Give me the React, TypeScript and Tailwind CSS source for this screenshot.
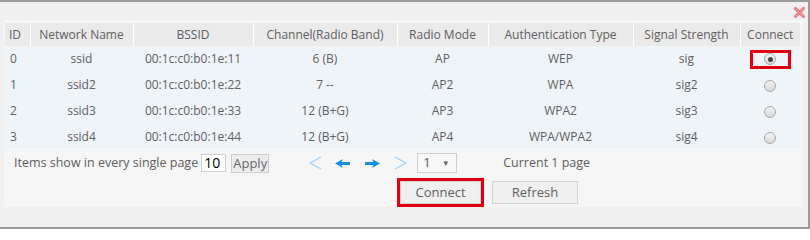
import React from "react";

const cols = [
  { w: "w-[25px]", label: "ID", left: true },
  { w: "w-[103px]", label: "Network Name" },
  { w: "w-[120px]", label: "BSSID" },
  { w: "w-[144px]", label: "Channel(Radio Band)" },
  { w: "w-[91px]", label: "Radio Mode" },
  { w: "w-[145px]", label: "Authentication Type" },
  { w: "w-[107px]", label: "Signal Strength" },
  { w: "w-[60px]", label: "Connect" },
];

const rows = [
  ["0", "ssid", "00:1c:c0:b0:1e:11", "6 (B)", "AP", "WEP", "sig"],
  ["1", "ssid2", "00:1c:c0:b0:1e:22", "7 --", "AP2", "WPA", "sig2"],
  ["2", "ssid3", "00:1c:c0:b0:1e:33", "12 (B+G)", "AP3", "WPA2", "sig3"],
  ["3", "ssid4", "00:1c:c0:b0:1e:44", "12 (B+G)", "AP4", "WPA/WPA2", "sig4"],
];

function Radio({ checked }: { checked?: boolean }) {
  return (
    <span className="inline-flex items-center justify-center w-[12px] h-[12px] rounded-full border border-[#a8a8a8] bg-[linear-gradient(#f4f4f4,#d8d8d8)]">
      {checked && <span className="w-[5px] h-[5px] rounded-full bg-[#444]" />}
    </span>
  );
}

export default function App() {
  return (
    <div
      className="relative w-[810px] h-[229px] bg-[#f0f0f0] border-t-2 border-r-2 border-b-2 border-[#9a9a9a] text-[#606060] text-[12px]"
      style={{ fontFamily: '"Open Sans", "Noto Sans", sans-serif' }}
    >
      <svg className="absolute right-[3px] top-[5px]" width="11" height="11" viewBox="0 0 11 11">
        <path d="M1.5 1.5 L9.5 9.5 M9.5 1.5 L1.5 9.5" stroke="#e9737a" strokeWidth="3" strokeLinecap="round" />
        <path d="M1.5 1.5 L9.5 9.5 M9.5 1.5 L1.5 9.5" stroke="#f3a3a8" strokeWidth="1" strokeLinecap="round" />
      </svg>
      <div className="mt-[18px] ml-[4px] w-[799px] h-[187px] bg-[#f6f6f6] pt-[3px] pl-[1px]">
        <table className="border-collapse table-fixed w-[795px]">
          <thead>
            <tr className="h-[23px] bg-[#eaeaea]">
              {cols.map((c, i) => (
                <th
                  key={i}
                  className={`${c.w} p-0 font-normal text-[#606060] ${c.left ? "text-left pl-[4px]" : "text-center"} ${i < cols.length - 1 ? "border-r border-white" : ""}`}
                >
                  {c.label}
                </th>
              ))}
            </tr>
          </thead>
          <tbody>
            {rows.map((r, ri) => (
              <tr key={ri} className="h-[26px] bg-[#eff4f9]">
                {r.map((v, ci) => (
                  <td key={ci} className={`p-0 ${ci === 0 ? "text-left pl-[5px]" : "text-center"}`}>
                    {v}
                  </td>
                ))}
                <td className="p-0 text-center">
                  {ri === 0 ? (
                    <span className="inline-flex items-center justify-center w-[41px] h-[19px] border-[3px] border-[#e00012] align-middle">
                      <Radio checked />
                    </span>
                  ) : (
                    <span className="inline-flex align-middle">
                      <Radio />
                    </span>
                  )}
                </td>
              </tr>
            ))}
          </tbody>
        </table>
        <div className="flex items-center h-[26px] pl-[9px]">
          <span className="text-[12.5px]">Items show in every single page</span>
          <span className="ml-[3px] w-[25px] h-[18px] bg-white border border-[#cfcfcf] text-black text-[14px] leading-[16px] pl-[2px]">10</span>
          <span className="ml-[5px] w-[38px] h-[19px] bg-[#ececec] border border-[#cdcdcd] text-[#666] text-[13px] leading-[17px] text-center">Apply</span>
          <svg className="ml-[39px]" width="15" height="14" viewBox="0 0 15 14">
            <path d="M13 1 L2 7 L13 13" fill="none" stroke="#9fd2f2" strokeWidth="1.2" />
          </svg>
          <svg className="ml-[12px]" width="16" height="9" viewBox="0 0 16 9">
            <path d="M0 4.5 L8 0 L6.5 3 L15 3 L15 6 L6.5 6 L8 9 Z" fill="#1a8fe0" />
          </svg>
          <svg className="ml-[13px]" width="16" height="9" viewBox="0 0 16 9">
            <path d="M16 4.5 L8 0 L9.5 3 L1 3 L1 6 L9.5 6 L8 9 Z" fill="#1a8fe0" />
          </svg>
          <svg className="ml-[13px]" width="15" height="14" viewBox="0 0 15 14">
            <path d="M2 1 L13 7 L2 13" fill="none" stroke="#9fd2f2" strokeWidth="1.2" />
          </svg>
          <span className="ml-[9px] flex items-center w-[40px] h-[20px] border border-[#cfcfcf] bg-[#f8f8f8] pl-[5px] text-[13px]">
            <span>1</span>
            <span className="ml-[11px] text-[8px] text-[#666]">▼</span>
          </span>
          <span className="ml-[46px] text-[12.5px]">Current 1 page</span>
        </div>
        <div className="flex items-start pl-[392px] pt-[2px]">
          <span className="border-[3px] border-[#e00012] w-[87px] h-[29px] flex">
            <span className="flex-1 bg-[#efefef] border border-[#d0d0d0] text-[13px] text-[#606060] flex items-center justify-center">Connect</span>
          </span>
          <span className="ml-[8px] mt-[3px] w-[86px] h-[23px] bg-[#efefef] border border-[#d0d0d0] text-[13px] text-[#606060] flex items-center justify-center">Refresh</span>
        </div>
      </div>
    </div>
  );
}
